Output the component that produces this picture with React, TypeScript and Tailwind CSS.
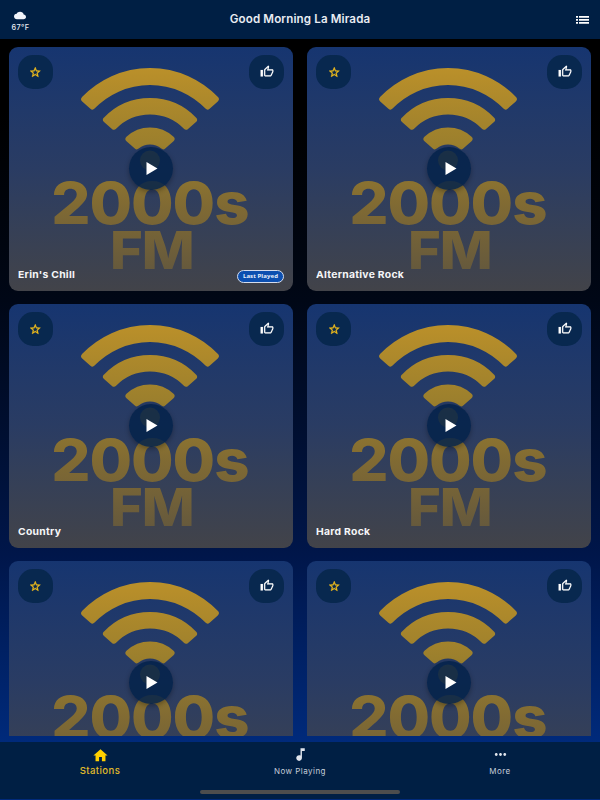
import React from "react";
import { MdHome, MdMusicNote, MdMoreHoriz, MdCloud } from "react-icons/md";

const CX = 141;
const CY = 115;

// One band of the radio wave, cut off radially on both sides.
function band(outer: number, inner: number, halfAngle: number): string {
  const inset = 3;
  const ro = outer - inset;
  const ri = inner + inset;
  const a = (halfAngle * Math.PI) / 180;
  const ao = a - inset / ro;
  const ai = a - inset / ri;
  const p = (r: number, t: number) => `${(CX + r * Math.sin(t)).toFixed(2)} ${(CY - r * Math.cos(t)).toFixed(2)}`;
  return `M${p(ro, -ao)}A${ro} ${ro} 0 0 1 ${p(ro, ao)}L${p(ri, ai)}A${ri} ${ri} 0 0 0 ${p(ri, -ai)}Z`;
}

function Artwork({ id }: { id: string }) {
  const paint = `url(#${id})`;
  return (
    <svg className="absolute inset-0 h-full w-full" viewBox="0 0 284 243.5" preserveAspectRatio="none">
      <defs>
        <linearGradient id={id} gradientUnits="userSpaceOnUse" x1="0" y1="0" x2="0" y2="243.5">
          <stop offset="0" stopColor="#c2962a" />
          <stop offset="0.12" stopColor="#b78e2a" />
          <stop offset="0.4" stopColor="#9b7f2d" />
          <stop offset="0.65" stopColor="#806a33" />
          <stop offset="0.9" stopColor="#675a3c" />
          <stop offset="1" stopColor="#5a523f" />
        </linearGradient>
      </defs>
      <g fill={paint} stroke={paint} strokeWidth="6" strokeLinejoin="round">
        <path d={band(94, 77, 48.2)} />
        <path d={band(64, 47.5, 49)} />
        <path d={band(34.5, 17.5, 48.5)} />
      </g>
      <circle cx={CX} cy={CY - 1.5} r="10" fill={paint} />
      <g fill={paint} fontFamily="Inter, sans-serif" fontWeight="800">
        <text x="42.2" y="176.5" fontSize="58" letterSpacing="-1" textLength="197.3" lengthAdjust="spacingAndGlyphs">2000s</text>
        <text x="101" y="222" fontSize="52.4" letterSpacing="-1" textLength="83.6" lengthAdjust="spacingAndGlyphs">FM</text>
      </g>
    </svg>
  );
}

function StationCard({ name, id, last }: { name: string; id: string; last?: boolean }) {
  return (
    <article className="relative flex h-[243.5px] flex-col justify-between overflow-hidden rounded-[9px] bg-linear-to-b from-[#163570] via-[#2a3c63] to-[#424349] px-[9px] pt-[8px] pb-[8px]">
      <Artwork id={id} />
      <div className="relative flex justify-between">
        <button className="flex h-[33.5px] w-[35px] items-center justify-center rounded-[15px] bg-[#08284f] text-[#f4c01d]">
          <svg className="h-[12.5px] w-[12.5px]" viewBox="0 0 24 24" fill="currentColor" stroke="currentColor" strokeWidth="0.7">
            <path d="M22 9.24l-7.19-.62L12 2 9.19 8.63 2 9.24l5.46 4.73L5.82 21 12 17.27 18.18 21l-1.63-7.03L22 9.24zM12 15.4l-3.76 2.27 1-4.28-3.32-2.88 4.38-.38L12 6.1l1.71 4.04 4.38.38-3.32 2.88 1 4.28L12 15.4z" />
          </svg>
        </button>
        <button className="flex h-[33.5px] w-[35px] items-center justify-center rounded-[15px] bg-[#08284f] text-white">
          <svg className="h-[13px] w-[14px]" viewBox="0 0 24 24" preserveAspectRatio="none" fill="currentColor" stroke="currentColor" strokeWidth="0.2">
            <path d="M9 21h9c.83 0 1.54-.5 1.84-1.22l3.02-7.05c.09-.23.14-.47.14-.73v-2c0-1.1-.9-2-2-2h-6.31l.95-4.57.03-.32c0-.41-.17-.79-.44-1.06L14.17 1 7.58 7.59C7.22 7.95 7 8.45 7 9v10c0 1.1.9 2 2 2zM9 9l4.34-4.34L12 10h9v2l-3 7H9V9zM1 9h4v12H1z" />
          </svg>
        </button>
      </div>
      <button className="absolute top-[99.5px] left-[120px] flex h-[43px] w-[43.5px] items-center justify-center rounded-full bg-[#03224a]/85 shadow-[0_2px_5px_rgba(0,0,0,0.3)]">
        <svg className="ml-[3px] h-[13px] w-[12px]" viewBox="0 0 12 13" fill="white">
          <path d="M.5 0L11.5 6.5L.5 13Z" />
        </svg>
      </button>
      <div className="relative flex items-end justify-between">
        <h2 className="origin-left scale-x-[1.08] pb-[1px] font-['Inter',sans-serif] text-[9.6px] leading-[14px] font-bold tracking-[0.25px] text-[#f5f6f8]">{name}</h2>
        {last && (
          <span className="flex h-[13px] w-[47px] items-center justify-center rounded-full border border-[#d4dced] bg-[#0c4fb0] font-['Noto_Sans',sans-serif] text-[6px] leading-none font-bold tracking-[0.1px] whitespace-nowrap text-[#e8effb]">
            Last Played
          </span>
        )}
      </div>
    </article>
  );
}

const stations = ["Erin's Chill", "Alternative Rock", "Country", "Hard Rock", "Jazz", "Pop"];

export default function App() {
  return (
    <div className="flex h-[800px] w-[600px] flex-col overflow-hidden bg-[linear-gradient(to_bottom,#000_0px,#000_110px,#000716_300px,#00164a_555px,#002a7b_742px)] font-['Inter',sans-serif]">
      <header className="grid h-[39px] shrink-0 grid-cols-[21px_1fr_21px] items-center bg-[#001f44] px-[10px]">
        <div className="flex w-[21px] flex-col items-center pt-[5px] text-[#e9edf3]">
          <MdCloud className="mr-[2px] h-[11px] w-[12px] text-[#f2f4fb]" preserveAspectRatio="none" />
          <span className="text-[7.3px] leading-[13px] font-medium tracking-[0.35px]">67°F</span>
        </div>
        <h1 className="text-center text-[11.6px] font-semibold tracking-[0.13px] text-[#e9ecf2]">Good Morning La Mirada</h1>
        <svg className="mr-[1px] h-[8px] w-[13px] justify-self-end" viewBox="0 0 13 8" fill="white">
          <path d="M0 0h2v1.7H0zM3 0h10v1.7H3zM0 3h2v1.7H0zM3 3h10v1.7H3zM0 6h2v1.7H0zM3 6h10v1.7H3z" />
        </svg>
      </header>
      <main className="h-[697px] shrink-0 overflow-hidden px-[9px] pt-[8px]">
        <div className="grid grid-cols-[284px_284px] gap-x-[14.3px] gap-y-[13.5px]">
          {stations.map((name, i) => (
            <StationCard key={name} name={name} id={`art-${i}`} last={i === 0} />
          ))}
        </div>
      </main>
      <footer className="mt-[6px] flex h-[57px] shrink-0 flex-col items-center bg-[#001f44]">
        <nav className="grid h-[36px] w-full grid-cols-3 text-[#c5cdd9]">
          <a className="flex flex-col items-center pt-[5px] text-[#ffd000]">
            <MdHome size={17} />
            <span className="text-[9.6px] leading-[13px] font-medium tracking-[0.4px] text-[#e0bb2a]">Stations</span>
          </a>
          <a className="flex flex-col items-center pt-[4px]">
            <MdMusicNote size={17} className="text-[#e1e6ee]" />
            <span className="text-[8px] leading-[16px] tracking-[0.45px]">Now Playing</span>
          </a>
          <a className="flex flex-col items-center pt-[4px]">
            <MdMoreHoriz size={17} className="text-[#e1e6ee]" />
            <span className="text-[8px] leading-[16px] tracking-[0.45px]">More</span>
          </a>
        </nav>
        <div className="mt-[12px] h-[4px] w-[200px] rounded-full bg-[#4d4d4d]" />
      </footer>
    </div>
  );
}
